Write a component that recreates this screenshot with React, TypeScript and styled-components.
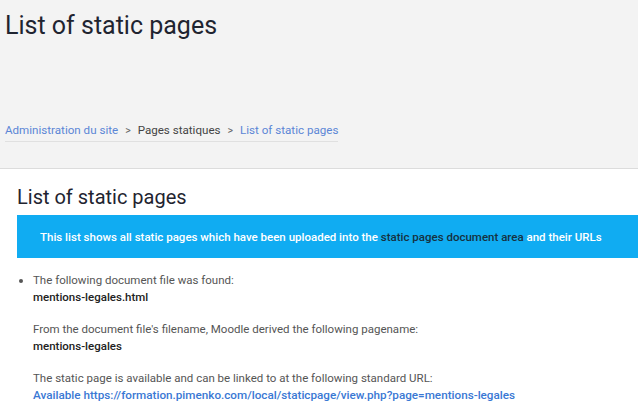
import { createGlobalStyle, styled } from 'styled-components';

const GlobalStyle = createGlobalStyle`
  html, body {
    margin: 0;
    padding: 0;
    background: #ffffff;
    font-family: Roboto, "Liberation Sans", sans-serif;
    overflow: hidden;
  }
`;

const Page = styled.div`
  width: 638px;
  display: flex;
  flex-direction: column;
`;

const Header = styled.header`
  background: #f3f3f3;
  border-bottom: 1px solid #dcdcdc;
  height: 169px;
  box-sizing: border-box;
  padding: 10px 5px 0;
  display: flex;
  flex-direction: column;
`;

const PageTitle = styled.h1`
  margin: 0;
  font-size: 25px;
  font-weight: 400;
  color: #1f2430;
  line-height: 32px;
`;

const Breadcrumb = styled.nav`
  margin-top: 81px;
  align-self: flex-start;
  display: flex;
  align-items: center;
  column-gap: 7px;
  font-size: 11.6px;
  padding: 0 0 4px 0;
  border-bottom: 1px solid #e0e0e0;
`;

const Crumb = styled.span<{ $link?: boolean }>`
  color: ${(p) => (p.$link ? '#5b86d6' : '#444444')};
`;

const Sep = styled.span`
  color: #666666;
  font-size: 10.5px;
`;

const Main = styled.main`
  padding: 14px 0 0 17px;
  display: flex;
  flex-direction: column;
`;

const SectionTitle = styled.h2`
  margin: 0;
  font-size: 20px;
  font-weight: 400;
  color: #1f2430;
  line-height: 28px;
`;

const Notice = styled.div`
  margin-top: 4px;
  background: #10acf2;
  height: 43px;
  display: flex;
  align-items: center;
  padding-left: 23px;
  font-size: 11.5px;
  font-weight: 500;
  color: #ffffff;
  white-space: nowrap;
`;

const NoticeLink = styled.span`
  color: #16313f;
`;

const List = styled.ul`
  margin: 14px 0 0;
  padding-left: 16px;
  font-size: 11.5px;
  color: #555555;
  line-height: 17px;
`;

const Item = styled.li`
  padding-left: 0;
`;

const Para = styled.p`
  margin: 0 0 15px;
`;

const Strong = styled.strong`
  color: #222222;
  font-weight: 500;
`;

const UrlLink = styled.a`
  color: #3a78d4;
  font-weight: 500;
  font-size: 11.7px;
  text-decoration: none;
`;

export default function App() {
  return (
    <Page>
      <GlobalStyle />
      <Header>
        <PageTitle>List of static pages</PageTitle>
        <Breadcrumb>
          <Crumb $link>Administration du site</Crumb>
          <Sep>&gt;</Sep>
          <Crumb>Pages statiques</Crumb>
          <Sep>&gt;</Sep>
          <Crumb $link>List of static pages</Crumb>
        </Breadcrumb>
      </Header>
      <Main>
        <SectionTitle>List of static pages</SectionTitle>
        <Notice>
          This list shows all static pages which have been uploaded into the&nbsp;
          <NoticeLink>static pages document area</NoticeLink>&nbsp;and their URLs
        </Notice>
        <List>
          <Item>
            <Para>
              The following document file was found:
              <br />
              <Strong>mentions-legales.html</Strong>
            </Para>
            <Para>
              From the document file's filename, Moodle derived the following pagename:
              <br />
              <Strong>mentions-legales</Strong>
            </Para>
            <Para>
              The static page is available and can be linked to at the following standard URL:
              <br />
              <UrlLink href="#">
                Available https://formation.pimenko.com/local/staticpage/view.php?page=mentions-legales
              </UrlLink>
            </Para>
          </Item>
        </List>
      </Main>
    </Page>
  );
}
